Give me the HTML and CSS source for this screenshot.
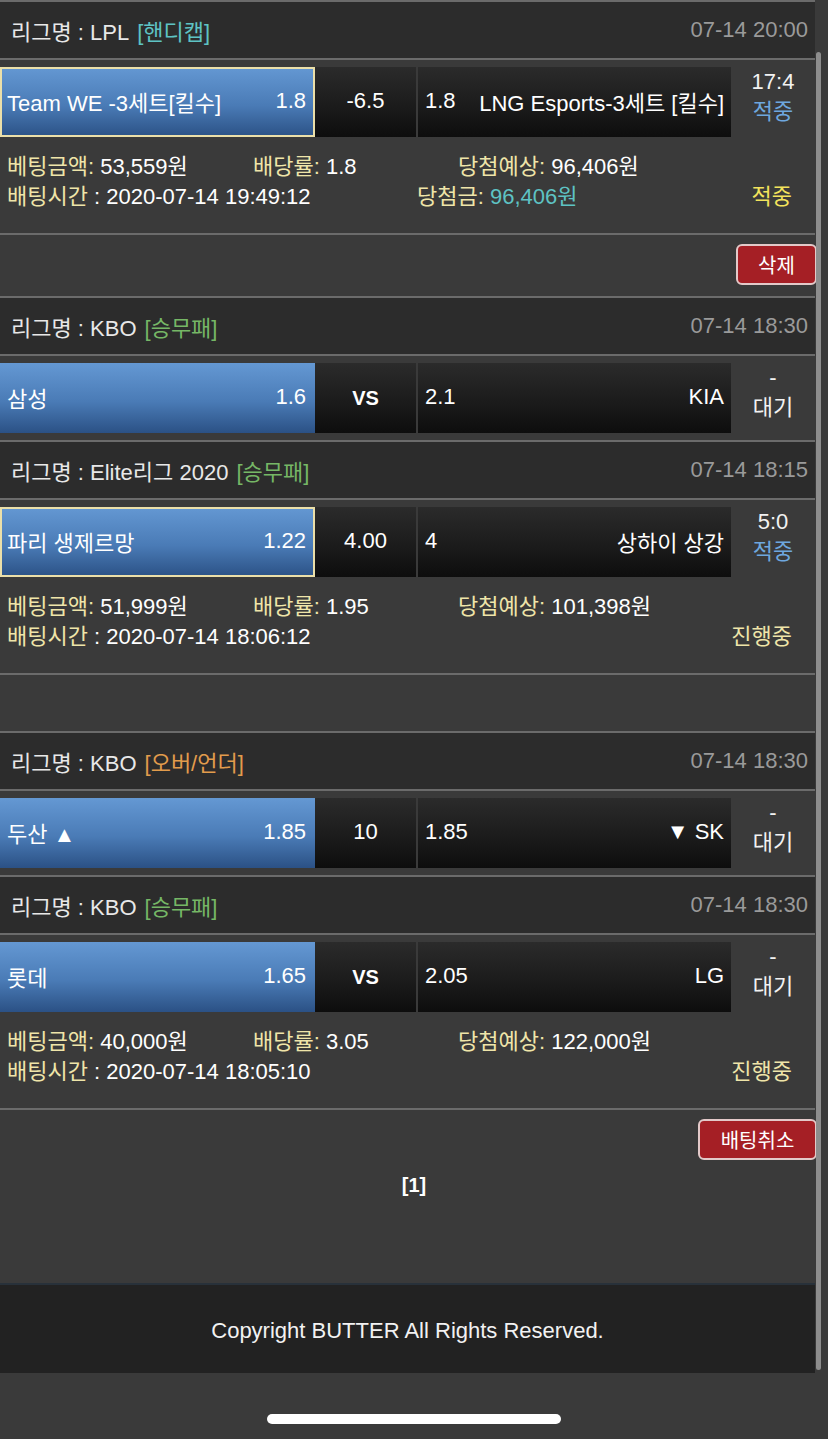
FILE: index.html
```html
<!DOCTYPE html>
<html>
<head>
    <title>배팅내역</title>
    <link rel="stylesheet" href="styles.css">
</head>
<body>
    <div class="page">
        <!-- LPL handicap -->
        <div class="league">
            <span class="lname">리그명 : LPL</span>
            <span class="type handi">[핸디캡]</span>
            <span class="date">07-14 20:00</span>
        </div>
        <div class="match">
            <div class="home picked"><span>Team WE -3세트[킬수]</span><span>1.8</span></div>
            <div class="mid">-6.5</div>
            <div class="away"><span>1.8</span><span>LNG Esports-3세트 [킬수]</span></div>
            <div class="score">17:4<br><span class="hit">적중</span></div>
        </div>
        <div class="info">
            <div class="row">
                <span class="c1"><span class="lbl">베팅금액:</span> 53,559원</span>
                <span class="c2"><span class="lbl">배당률:</span> 1.8</span>
                <span><span class="lbl">당첨예상:</span> 96,406원</span>
            </div>
            <div class="row">
                <span class="c1w"><span class="lbl">배팅시간</span> : 2020-07-14 19:49:12</span>
                <span><span class="lbl">당첨금:</span> <span class="won">96,406원</span></span>
                <span class="status win">적중</span>
            </div>
        </div>
        <div class="actions"><button class="btn-red del">삭제</button></div>

        <!-- KBO -->
        <div class="league">
            <span class="lname">리그명 : KBO</span>
            <span class="type wdl">[승무패]</span>
            <span class="date">07-14 18:30</span>
        </div>
        <div class="match">
            <div class="home"><span>삼성</span><span>1.6</span></div>
            <div class="mid vs">VS</div>
            <div class="away"><span>2.1</span><span>KIA</span></div>
            <div class="score">-<br>대기</div>
        </div>

        <!-- Elite -->
        <div class="league">
            <span class="lname">리그명 : Elite리그 2020</span>
            <span class="type wdl">[승무패]</span>
            <span class="date">07-14 18:15</span>
        </div>
        <div class="match">
            <div class="home picked"><span>파리 생제르망</span><span>1.22</span></div>
            <div class="mid">4.00</div>
            <div class="away"><span>4</span><span>상하이 상강</span></div>
            <div class="score">5:0<br><span class="hit">적중</span></div>
        </div>
        <div class="info">
            <div class="row">
                <span class="c1"><span class="lbl">베팅금액:</span> 51,999원</span>
                <span class="c2"><span class="lbl">배당률:</span> 1.95</span>
                <span><span class="lbl">당첨예상:</span> 101,398원</span>
            </div>
            <div class="row">
                <span class="c1w"><span class="lbl">배팅시간</span> : 2020-07-14 18:06:12</span>
                <span class="status">진행중</span>
            </div>
        </div>
        <div class="actions empty"></div>

        <!-- KBO over/under -->
        <div class="league">
            <span class="lname">리그명 : KBO</span>
            <span class="type ou">[오버/언더]</span>
            <span class="date">07-14 18:30</span>
        </div>
        <div class="match">
            <div class="home"><span>두산 ▲</span><span>1.85</span></div>
            <div class="mid">10</div>
            <div class="away"><span>1.85</span><span>▼ SK</span></div>
            <div class="score">-<br>대기</div>
        </div>

        <!-- KBO -->
        <div class="league">
            <span class="lname">리그명 : KBO</span>
            <span class="type wdl">[승무패]</span>
            <span class="date">07-14 18:30</span>
        </div>
        <div class="match">
            <div class="home"><span>롯데</span><span>1.65</span></div>
            <div class="mid vs">VS</div>
            <div class="away"><span>2.05</span><span>LG</span></div>
            <div class="score">-<br>대기</div>
        </div>
        <div class="info">
            <div class="row">
                <span class="c1"><span class="lbl">베팅금액:</span> 40,000원</span>
                <span class="c2"><span class="lbl">배당률:</span> 3.05</span>
                <span><span class="lbl">당첨예상:</span> 122,000원</span>
            </div>
            <div class="row">
                <span class="c1w"><span class="lbl">배팅시간</span> : 2020-07-14 18:05:10</span>
                <span class="status">진행중</span>
            </div>
        </div>
        <div class="actions"><button class="btn-red cancel">배팅취소</button></div>

        <div class="pager">[1]</div>

        <div class="footer">Copyright BUTTER All Rights Reserved.</div>
        <div class="home-bar"></div>
    </div>
    <div class="scrollbar"></div>
</body>
</html>
```

FILE: styles.css
```css
body {
    margin: 0;
    background-color: #3a3a3a;
    font-family: "Liberation Sans", "Noto Sans CJK KR", sans-serif;
    font-size: 22px;
    color: #fff;
    position: relative;
}

.page {
    width: 828px;
    overflow: hidden;
}

.league {
    display: flex;
    align-items: center;
    height: 56px;
    margin-right: 13px;
    padding: 0 7px 0 11px;
    background-color: #2c2c2c;
    border-top: 2px solid #6b6b6b;
    border-bottom: 2px solid #6b6b6b;
}

.lname {
    color: #e8e8e8;
}

.type {
    margin-left: 8px;
}

.handi { color: #5ec3c4; }
.wdl { color: #76b766; }
.ou { color: #e29c4c; }

.date {
    margin-left: auto;
    color: #9a9a9a;
}

.match {
    display: grid;
    grid-template-columns: 315px 101px 315px 1fr;
    height: 70px;
    padding: 7px 0 7px;
    margin-right: 13px;
}

.home {
    display: flex;
    align-items: center;
    justify-content: space-between;
    padding: 0 9px 3px 7px;
    background: linear-gradient(to bottom, #6498d3, #4a7bb6 55%, #2b5185);
}

.home.picked {
    box-shadow: inset 0 0 0 2px #ebdfa9;
}

.mid,
.away {
    background: linear-gradient(to bottom, #2b2b2b, #1a1a1a 60%, #0d0d0d);
}

.mid {
    display: flex;
    align-items: center;
    justify-content: center;
    padding-bottom: 3px;
}

.mid.vs {
    font-weight: bold;
    font-size: 20px;
    padding-bottom: 0;
}

.away {
    display: flex;
    align-items: center;
    justify-content: space-between;
    margin-left: 2px;
    padding: 0 7px 3px;
}

.score {
    text-align: center;
    line-height: 30px;
    color: #f2f2f2;
}

.hit {
    color: #6ea7df;
}

.info {
    margin-right: 13px;
    padding: 8px 0 21px 7px;
    border-bottom: 2px solid #6b6b6b;
}

.row {
    display: flex;
    line-height: 30px;
}

.c1 { width: 246px; }
.c2 { width: 205px; }
.c1w { width: 410px; }

.lbl {
    color: #efe5a9;
}

.won {
    color: #5ec3c4;
}

.status {
    margin-left: auto;
    margin-right: 23px;
    color: #efe5a9;
}

.status.win {
    color: #f3e35c;
}

.actions {
    display: flex;
    justify-content: flex-end;
    padding: 9px 11px 11px;
}

.actions.empty {
    height: 56px;
    padding: 0;
}

.btn-red {
    height: 41px;
    padding: 0;
    background-color: #a51f25;
    border: 2px solid #e3c9c9;
    border-radius: 6px;
    color: #fff;
    font-family: "Liberation Sans", "Noto Sans CJK KR", sans-serif;
    font-size: 20px;
}

.btn-red.del { width: 81px; }
.btn-red.cancel { width: 119px; }

.pager {
    text-align: center;
    font-weight: bold;
    font-size: 20px;
    padding-top: 3px;
    height: 109px;
}

.footer {
    margin-right: 13px;
    height: 88px;
    line-height: 92px;
    text-align: center;
    background-color: #222;
    border-top: 2px solid #28313a;
    color: #f2f2f2;
}

.home-bar {
    width: 294px;
    height: 10px;
    margin: 41px auto 0;
    border-radius: 5px;
    background-color: #fff;
}

.scrollbar {
    position: absolute;
    left: 816px;
    top: 52px;
    width: 5px;
    height: 1318px;
    border-radius: 3px;
    background-color: #8d8d8d;
}
```
